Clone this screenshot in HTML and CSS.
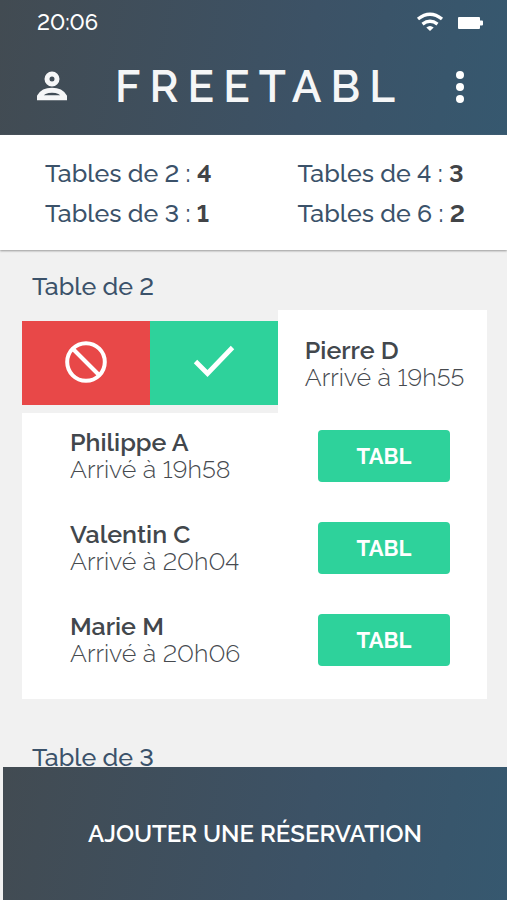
FILE: index.html
```html
<!DOCTYPE html>
<html lang="fr">
<head>
<meta charset="utf-8">
<meta name="viewport" content="width=device-width, initial-scale=1">
<title>FREETABL</title>
<link rel="stylesheet" href="styles.css">
</head>
<body>
<header class="header">
  <div class="status">
    <time>20:06</time>
    <div class="status-icons">
      <svg width="28" height="20" viewBox="0 0 28 20" fill="none" stroke="#fff" stroke-width="3.400"><path d="M2 6Q14-3.500 26 6"/><path d="M6.500 11.200Q14 5.500 21.500 11.200"/><path d="M14 18L10.300 14.500Q14 11.500 17.700 14.500Z" fill="#fff" stroke="none"/></svg>
      <svg width="25" height="12" viewBox="0 0 25 12" fill="#fff"><path d="M1 0H21Q22 0 22 1V3.500H24Q25 3.500 25 4.500V7.500Q25 8.500 24 8.500H22V11Q22 12 21 12H1Q0 12 0 11V1Q0 0 1 0Z"/></svg>
    </div>
  </div>
  <div class="bar">
    <button class="icon-button" aria-label="Profil">
      <svg width="30" height="30" viewBox="0 0 30 30" fill="none" stroke="#f5f6f7"><circle cx="15" cy="7" r="5" stroke-width="5"/><path d="M2.500 25.800V24.500Q6 18.300 15 18.300T27.500 24.500V25.800Z" stroke-width="5"/></svg>
    </button>
    <h1>FREETABL</h1>
    <button class="icon-button" aria-label="Menu">
      <svg width="8" height="32" viewBox="0 0 8 32" fill="#fff"><circle cx="4" cy="4" r="4"/><circle cx="4" cy="16" r="4"/><circle cx="4" cy="28" r="4"/></svg>
    </button>
  </div>
</header>
<section class="stats">
  <p>Tables de 2 : <b>4</b></p>
  <p>Tables de 4 : <b>3</b></p>
  <p>Tables de 3 : <b>1</b></p>
  <p>Tables de 6 : <b>2</b></p>
</section>
<main class="queue">
  <h2>Table de 2</h2>
  <ul class="card">
    <li class="swiped">
      <div class="actions">
        <button class="refuse" aria-label="Refuser">
          <svg width="42" height="42" viewBox="0 0 42 42" fill="none" stroke="#fff" stroke-width="4"><circle cx="21" cy="20" r="18.800"/><path d="M7.500 6.500L34.500 33.500"/></svg>
        </button>
        <button class="accept" aria-label="Accepter">
          <svg width="42" height="42" viewBox="0 0 42 42" fill="none" stroke="#fff" stroke-width="4.800"><path d="M2.500 19.500L14.500 31.500L39.500 5.500"/></svg>
        </button>
      </div>
      <div class="guest"><strong>Pierre D</strong><span>Arrivé à 19h55</span></div>
    </li>
    <li class="row"><div class="guest"><strong>Philippe A</strong><span>Arrivé à 19h58</span></div><button class="tabl">TABL</button></li>
    <li class="row"><div class="guest"><strong>Valentin C</strong><span>Arrivé à 20h04</span></div><button class="tabl">TABL</button></li>
    <li class="row"><div class="guest"><strong>Marie M</strong><span>Arrivé à 20h06</span></div><button class="tabl">TABL</button></li>
  </ul>
  <h2>Table de 3</h2>
</main>
<button class="add">AJOUTER UNE RÉSERVATION</button>
</body>
</html>
```
FILE: styles.css
```css
* {
  box-sizing: border-box;
}

body {
  display: flex;
  flex-direction: column;
  height: 100vh;
  margin: 0;
  background: #f1f1f1;
  color: #42474c;
  font: 500 25px/27px Raleway, Lato, sans-serif;
  font-variant-numeric: lining-nums;
}

h1, h2, p, ul {
  margin: 0;
  padding: 0;
}

button {
  border: 0;
  padding: 0;
  color: #fff;
  font: inherit;
  cursor: pointer;
}

svg {
  display: block;
  overflow: visible;
}

.header,
.add {
  background: linear-gradient(100deg, #424b52, #3c5266 60%, #36586f);
  color: #fff;
}

.header {
  padding: 9px 24px 18px 37px;
}

.status,
.status-icons,
.bar,
.row,
.swiped {
  display: flex;
  align-items: center;
}

.status,
.bar,
.row {
  justify-content: space-between;
}

.status {
  font-size: 22px;
}

.status-icons {
  gap: 14px;
}

.bar {
  padding: 21px 19px 0 0;
}

.icon-button {
  background: none;
}

h1 {
  margin-right: 4px;
  color: #f5f6f7;
  font-size: 44px;
  font-weight: 600;
  line-height: 60px;
  letter-spacing: 9px;
}

.stats {
  display: grid;
  grid-template-columns: 1fr 1fr;
  column-gap: 43px;
  padding: 18px 0 17px 45px;
  background: #fff;
  box-shadow: 0 1px 2px #999;
  color: #3b526a;
  line-height: 40px;
}

.stats b {
  color: #424447;
}

.queue {
  flex: 1;
  min-height: 0;
  overflow: hidden;
  padding: 22px 20px 0 22px;
}

h2 {
  padding-left: 10px;
  color: #3b526a;
  font-size: 25px;
  font-weight: 500;
  line-height: 28px;
}

.card {
  margin: 10px 0 44px;
  padding-bottom: 32px;
  background: #fff;
  list-style: none;
}

.actions {
  display: flex;
  flex: 0 0 55%;
  padding: 11px 0 8px;
  background: #f1f1f1;
}

.actions button {
  display: grid;
  flex: 1;
  place-items: center;
  height: 84px;
}

.refuse {
  background: #e84848;
}

.accept,
.tabl {
  background: #2ed29b;
}

.guest {
  display: flex;
  flex-direction: column;
}

.guest strong {
  font-weight: 600;
}

.guest span {
  color: #464a4f;
  font-weight: 300;
}

.swiped .guest {
  padding: 4px 0 0 27px;
}

.row {
  padding: 16px 37px 0 48px;
}

.row + .row {
  padding-top: 38px;
}

.tabl {
  width: 132px;
  height: 52px;
  border-radius: 4px;
  font-size: 22px;
  font-weight: 700;
}

.add {
  flex: none;
  height: 133px;
  margin-left: 3px;
  font-size: 24px;
  font-weight: 600;
}
```
